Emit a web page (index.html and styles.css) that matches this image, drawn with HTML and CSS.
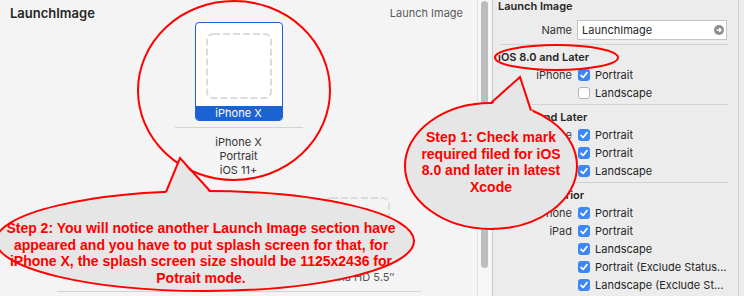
FILE: index.html
```html
<!DOCTYPE html>
<html lang="en">
<head>
    <meta charset="UTF-8">
    <meta name="viewport" content="width=device-width, initial-scale=1.0">
    <title>LaunchImage</title>
    <link rel="stylesheet" href="styles.css">
</head>
<body>
    <div class="window">
        <!-- Asset canvas -->
        <section class="canvas">
            <header class="canvas-head">
                <h1>LaunchImage</h1>
                <span class="set-type">Launch Image</span>
            </header>

            <div class="slot-row">
                <div class="slot selected">
                    <div class="tile">
                        <svg class="drop" width="66" height="66"><rect x="1" y="1" width="64" height="64" rx="6" /></svg>
                        <div class="tile-label">iPhone X</div>
                    </div>
                    <div class="slot-rule"></div>
                    <div class="slot-caption">iPhone X<br>Portrait<br>iOS 11+</div>
                </div>
            </div>

            <div class="slot-row">
                <div class="slot">
                    <div class="tile">
                        <svg class="drop" width="66" height="66"><rect x="1" y="1" width="64" height="64" rx="6" /></svg>
                        <div class="tile-label">Retina 4</div>
                    </div>
                    <div class="slot-rule"></div>
                </div>
                <div class="slot">
                    <div class="tile">
                        <svg class="drop" width="66" height="66"><rect x="1" y="1" width="64" height="64" rx="6" /></svg>
                        <div class="tile-label">Retina HD 4.7″</div>
                    </div>
                    <div class="slot-rule"></div>
                </div>
                <div class="slot">
                    <div class="tile">
                        <svg class="drop" width="66" height="66"><rect x="1" y="1" width="64" height="64" rx="6" /></svg>
                        <div class="tile-label">Retina HD 5.5″</div>
                    </div>
                    <div class="slot-rule"></div>
                </div>
            </div>
        </section>

        <div class="scroller"><div class="thumb"></div></div>

        <!-- Attributes inspector -->
        <aside class="inspector">
            <div class="inspector-body">
                <h2>Launch Image</h2>
                <div class="field-row">
                    <label>Name</label>
                    <div class="name-field">
                        <span>LaunchImage</span>
                        <svg width="10" height="10" viewBox="0 0 10 10"><circle cx="5" cy="5" r="5" fill="#8c8c8c"/><path d="M2.6 5h4.4M5.2 3l2 2-2 2" fill="none" stroke="#fff" stroke-width="1.3"/></svg>
                    </div>
                </div>

                <div class="rule"></div>
                <section class="group">
                    <h3>iOS 8.0 and Later</h3>
                    <div class="options">
                        <div class="option"><span class="device">iPhone</span><span class="check"><i class="box on"></i><span>Portrait</span></span></div>
                        <div class="option"><span class="device"></span><span class="check"><i class="box"></i><span>Landscape</span></span></div>
                    </div>
                </section>

                <div class="rule"></div>
                <section class="group">
                    <h3>iOS 7.0 and Later</h3>
                    <div class="options">
                        <div class="option"><span class="device">iPhone</span><span class="check"><i class="box on"></i><span>Portrait</span></span></div>
                        <div class="option"><span class="device">iPad</span><span class="check"><i class="box on"></i><span>Portrait</span></span></div>
                        <div class="option"><span class="device"></span><span class="check"><i class="box on"></i><span>Landscape</span></span></div>
                    </div>
                </section>

                <div class="rule"></div>
                <section class="group">
                    <h3>iOS 6.1 and Prior</h3>
                    <div class="options">
                        <div class="option"><span class="device">iPhone</span><span class="check"><i class="box on"></i><span>Portrait</span></span></div>
                        <div class="option"><span class="device">iPad</span><span class="check"><i class="box on"></i><span>Portrait</span></span></div>
                        <div class="option"><span class="device"></span><span class="check"><i class="box on"></i><span>Landscape</span></span></div>
                        <div class="option"><span class="device"></span><span class="check"><i class="box on"></i><span>Portrait (Exclude Status Bar)</span></span></div>
                        <div class="option"><span class="device"></span><span class="check"><i class="box on"></i><span>Landscape (Exclude Status Bar)</span></span></div>
                    </div>
                </section>
            </div>
        </aside>
    </div>

    <!-- Annotation marks drawn over the screenshot -->
    <svg class="marks" width="744" height="296" viewBox="0 0 744 296">
        <ellipse cx="234" cy="90.5" rx="96" ry="89.5" fill="none" stroke="#f00" stroke-width="2"/>
        <ellipse cx="556.5" cy="57.5" rx="61.5" ry="12.5" fill="none" stroke="#f00" stroke-width="2"/>

        <ellipse cx="205" cy="241" rx="209" ry="50" fill="#e6e6e6" stroke="#f00" stroke-width="2"/>
        <polygon points="165,195 180,160 211,194" fill="#e6e6e6"/>
        <polyline points="166,192 180,158 210,191" fill="none" stroke="#f00" stroke-width="2"/>

        <ellipse cx="491" cy="166" rx="86" ry="63" fill="#e6e6e6" stroke="#f00" stroke-width="2"/>
        <polygon points="490,106 520,79 534,115" fill="#e6e6e6"/>
        <polyline points="491,103 520,77 531,110.6" fill="none" stroke="#f00" stroke-width="2"/>
    </svg>

    <div class="note note-step1">Step 1: Check mark<br>required filed for iOS<br>8.0 and later in latest<br>Xcode</div>
    <div class="note note-step2">Step 2: You will notice another Launch Image section have<br>appeared and you have to put splash screen for that, for<br>iPhone X, the splash screen size should be 1125x2436 for<br>Potrait mode.</div>
</body>
</html>
```

FILE: styles.css
```css
* {
    box-sizing: border-box;
}

body {
    margin: 0;
    width: 744px;
    height: 296px;
    overflow: hidden;
    position: relative;
    font-family: Inter, "Liberation Sans", sans-serif;
    font-size: 11px;
    color: #262626;
    background: #f4f4f4;
}

.window {
    display: flex;
    height: 296px;
}

/* Canvas */
.canvas {
    width: 477px;
    background: #f4f4f4;
}

.canvas-head {
    display: flex;
    justify-content: space-between;
    align-items: center;
    height: 22px;
    padding: 6px 14px 2px 10px;
}

.canvas-head h1 {
    margin: 0;
    font-size: 13px;
    line-height: 14px;
    font-weight: 600;
    color: #262626;
}

.set-type {
    color: #5a5a5a;
}

.slot-row {
    display: flex;
    justify-content: center;
}

.slot-row + .slot-row {
    margin-top: 9px;
}

.slot {
    width: 118px;
    display: flex;
    flex-direction: column;
    align-items: center;
}

.tile {
    width: 88px;
    border: 1px solid transparent;
    border-radius: 4px;
    padding: 10px 10px 0;
}

.drop {
    display: block;
}

.drop rect {
    fill: none;
    stroke: #dcdcdc;
    stroke-width: 2;
    stroke-dasharray: 7 3;
}

.tile-label {
    margin: 7px -10px 0;
    height: 14px;
    line-height: 14px;
    text-align: center;
    white-space: nowrap;
    color: #555;
}

.slot.selected .tile {
    border-color: #1b62d3;
    background: #fff;
}

.slot.selected .tile-label {
    background: #1b62d3;
    color: #fff;
    border-radius: 0 0 3px 3px;
}

.slot-rule {
    flex-shrink: 0;
    width: 128px;
    height: 1px;
    margin-top: 6px;
    background: #d4d4d4;
}

.slot-caption {
    margin-top: 7px;
    line-height: 14px;
    text-align: center;
    color: #333;
}

/* Scroller */
.scroller {
    width: 15px;
    border-left: 1px solid #e3e3e3;
    background: #f7f7f7;
    padding: 1px 0 0 3px;
}

.thumb {
    width: 7px;
    height: 267px;
    border-radius: 4px;
    background: #bdbdbd;
}

/* Inspector */
.inspector {
    width: 252px;
    display: flex;
    border-left: 1px solid #c9c9c9;
    background: #ececec;
}

.inspector-body {
    width: 246px;
    padding-left: 5px;
    border-right: 1px solid #cfcfcf;
}

.inspector h2,
.group h3 {
    margin: 0;
    font-size: 11px;
    line-height: 13px;
    font-weight: 600;
}

.field-row {
    display: grid;
    grid-template-columns: 74px 150px;
    column-gap: 5px;
    align-items: center;
    margin: 7px 0 4px;
}

.field-row label,
.device {
    text-align: right;
    color: #333;
}

.name-field {
    height: 20px;
    display: flex;
    align-items: center;
    justify-content: space-between;
    padding: 0 2px 0 4px;
    border: 1px solid #c6c6c6;
    background: #fff;
}

.name-field svg {
    display: block;
}

.rule {
    height: 1px;
    margin: 0 10px 0 3px;
    background: #d3d3d3;
}

.group h3 {
    margin-top: 6px;
}

.options {
    margin: 2px 10px 2px 0;
}

.option {
    display: grid;
    grid-template-columns: 74px minmax(0, 1fr);
    column-gap: 6px;
    height: 18px;
    align-items: center;
}

.check {
    display: flex;
    align-items: center;
    gap: 5px;
    min-width: 0;
}

.check span {
    white-space: nowrap;
    overflow: hidden;
    text-overflow: ellipsis;
}

.box {
    flex-shrink: 0;
    width: 12px;
    height: 12px;
    border-radius: 3px;
    border: 1px solid #b5b5b5;
    background: #fff;
}

.box.on {
    border: none;
    background: #3b87f7 url("data:image/svg+xml;utf8,<svg xmlns='http://www.w3.org/2000/svg' width='12' height='12'><path d='M3 6.3l2.1 2.2L9 3.6' fill='none' stroke='white' stroke-width='1.7' stroke-linecap='round' stroke-linejoin='round'/></svg>") no-repeat center;
}

/* Annotations */
.marks {
    position: absolute;
    left: 0;
    top: 0;
}

.note {
    position: absolute;
    font-family: "Liberation Sans", Arial, sans-serif;
    font-weight: bold;
    font-size: 14px;
    line-height: 16.5px;
    color: #f00;
    text-align: center;
    white-space: nowrap;
}

.note-step1 {
    left: 401px;
    top: 129px;
    width: 180px;
}

.note-step2 {
    left: 1px;
    top: 220px;
    width: 400px;
}
```
